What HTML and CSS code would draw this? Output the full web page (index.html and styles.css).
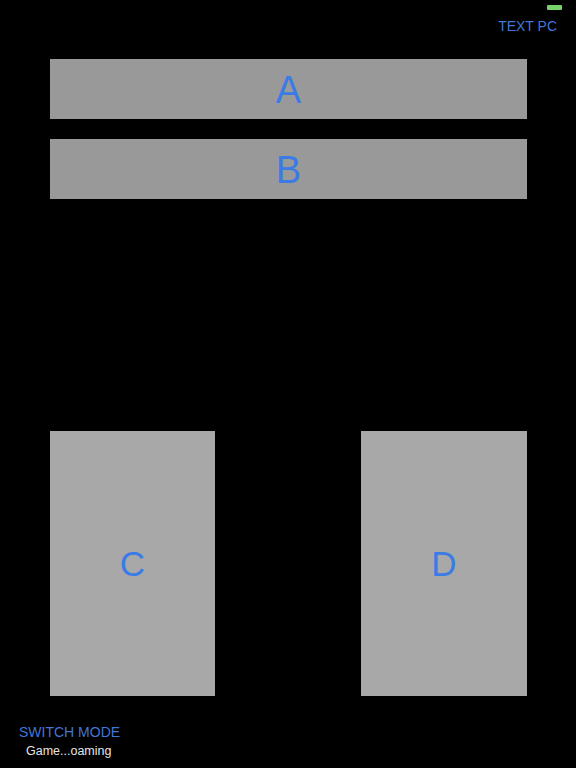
FILE: index.html
```html
<!DOCTYPE html>
<html lang="en">
<head>
<meta charset="utf-8">
<title>Controller</title>
<link rel="stylesheet" href="styles.css">
</head>
<body>
<div class="page">
  <div class="battery"></div>
  <header class="topbar">
    <span class="link">TEXT PC</span>
  </header>
  <main class="controls">
    <div class="bar-btn">A</div>
    <div class="bar-btn">B</div>
    <div class="pads">
      <div class="pad">C</div>
      <div class="pad">D</div>
    </div>
  </main>
  <footer class="footer">
    <div class="link">SWITCH MODE</div>
    <div class="status">Game...oaming</div>
  </footer>
</div>
</body>
</html>
```
FILE: styles.css
```css
html, body {
  margin: 0;
  padding: 0;
  background: #000;
}
.page {
  position: relative;
  width: 576px;
  height: 768px;
  background: #000;
  font-family: "Liberation Sans", Arial, sans-serif;
  display: flex;
  flex-direction: column;
  overflow: hidden;
}
.battery {
  position: absolute;
  top: 5px;
  left: 547px;
  width: 15px;
  height: 5px;
  background: #78d46a;
  border-radius: 1px;
}
.topbar {
  height: 59px;
  box-sizing: border-box;
  padding: 18px 19px 0 0;
  display: flex;
  justify-content: flex-end;
  align-items: flex-start;
}
.link {
  color: #4376d6;
  font-size: 14px;
  line-height: 17px;
}
.controls {
  display: flex;
  flex-direction: column;
  padding: 0 49px 0 50px;
}
.bar-btn {
  height: 60px;
  box-sizing: border-box;
  padding-top: 3px;
  background: #999999;
  color: #3a7be6;
  font-size: 38px;
  display: flex;
  align-items: center;
  justify-content: center;
}
.bar-btn + .bar-btn {
  margin-top: 20px;
}
.pads {
  margin-top: 232px;
  display: flex;
  justify-content: space-between;
}
.pad {
  width: 165px;
  height: 265px;
  background: #a8a8a8;
  color: #3a7be6;
  font-size: 35px;
  display: flex;
  align-items: center;
  justify-content: center;
}
.pad + .pad {
  width: 166px;
}
.footer {
  padding: 28px 0 0 19px;
}
.status {
  margin: 3px 0 0 7px;
  color: #e6e6e6;
  font-size: 12.5px;
  line-height: 15px;
}
```
